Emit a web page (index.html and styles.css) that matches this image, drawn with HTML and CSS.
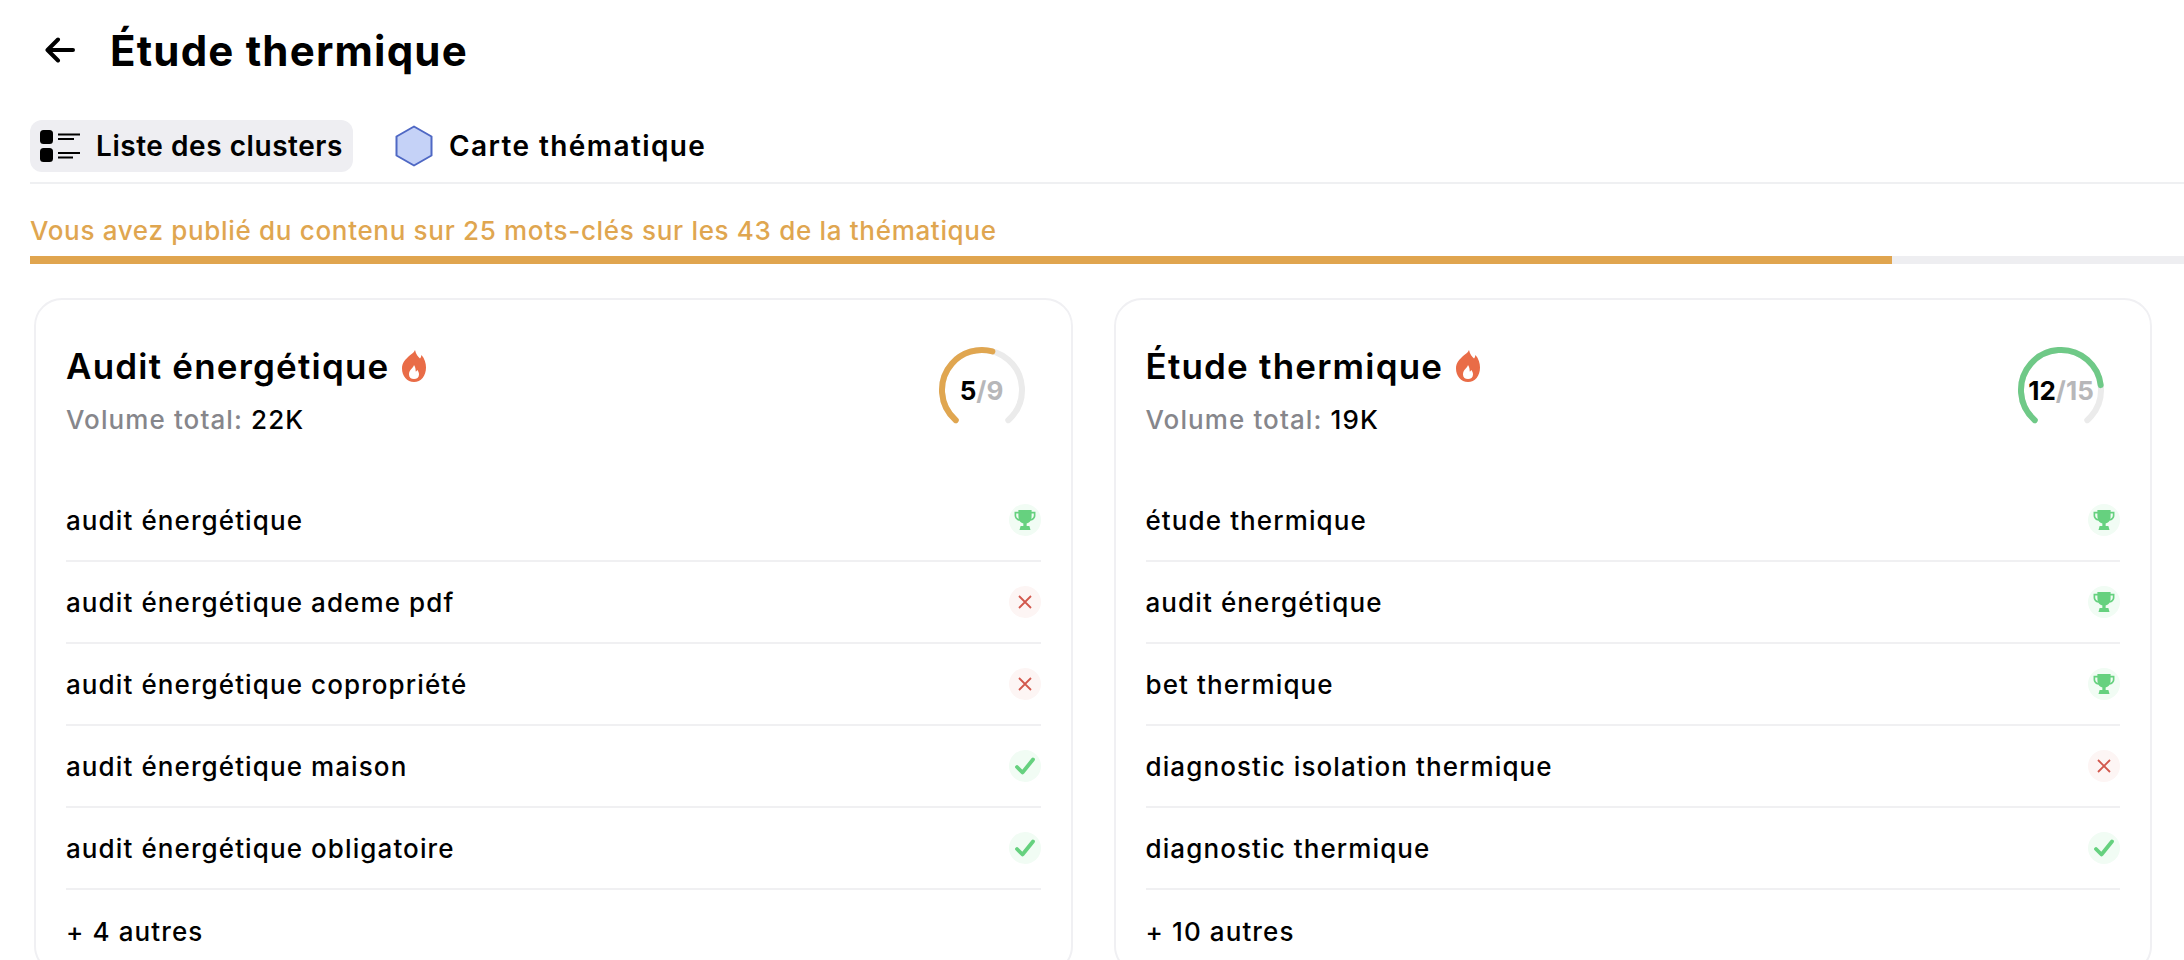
FILE: index.html
```html
<!DOCTYPE html>
<html lang="fr">
<head>
<meta charset="utf-8">
<title>Étude thermique</title>
<link rel="stylesheet" href="styles.css">
</head>
<body>
<svg class="defs" width="0" height="0">
  <defs>
    <symbol id="flame" viewBox="0 0 24 32" preserveAspectRatio="none">
      <path fill-rule="evenodd" d="M13 0c1 4.500 3 6.500 5 8.500 1-1 1-2 1.500-3.500 3 3.500 4.500 8 4.500 12.500C24 26 19 32 12 32S0 26 0 18.500C0 13 3 10 6 7 9 4 12 3 13 0ZM12 15c-.5 3-5 4.500-5 9.500 0 3 2.200 4.500 5 4.500s5-1.500 5-4.500c0-2-.8-3.500-1.800-4.500-.5 1-1 1.500-1.500 1.500 0-2.500-.4-4.500-1.700-6.500Z"/>
    </symbol>
    <symbol id="trophy" viewBox="0 0 20 20">
      <path d="M4 1h12v1.500h3.500V6c0 2.500-2 4.500-4.500 4.700-.8 1.300-2 2.100-3.500 2.400V15.500H14l1 3.500H5l1-3.500h2.500v-2.400C7 12.800 5.800 12 5 10.700 2.500 10.500.5 8.500.5 6V2.500H4V1Zm-2 3v2c0 1.300.9 2.500 2.300 3C4.100 8 4 7 4 6V4H2Zm14 0v2c0 1 0 2-.3 3C17.100 8.500 18 7.300 18 6V4h-2Z"/>
    </symbol>
    <symbol id="cross" viewBox="0 0 14 14">
      <path d="M1 1l12 12M13 1L1 13" fill="none" stroke="currentColor" stroke-width="1.800"/>
    </symbol>
    <symbol id="check" viewBox="0 0 20 18">
      <path d="M2 10l5.500 5.500L18 2.500" fill="none" stroke="currentColor" stroke-width="3.800" stroke-linecap="round" stroke-linejoin="round"/>
    </symbol>
  </defs>
</svg>
<div class="page">
  <header class="head">
    <svg class="back" viewBox="0 0 30 26" width="30" height="26"><path d="M28 13H3M13 2.500L2.500 13 13 23.500" fill="none" stroke="#000" stroke-width="4" stroke-linecap="round" stroke-linejoin="round"/></svg>
    <h1 class="title">Étude thermique</h1>
  </header>

  <nav class="tabs">
    <a class="tab tab-active">
      <svg class="tab-icon" viewBox="0 0 40 32" width="40" height="32">
        <rect x="0" y="0" width="13" height="14" rx="3.500" fill="#000"/>
        <rect x="0" y="18" width="13" height="14" rx="3.500" fill="#000"/>
        <path d="M18 4.500h22M18 9h16M18 23h22M18 27.500h15" fill="none" stroke="#000" stroke-width="2"/>
      </svg>
      <span>Liste des clusters</span>
    </a>
    <a class="tab tab-plain">
      <svg class="hex-icon" viewBox="0 0 38 42" width="38" height="42"><path d="M19 1.500L36.500 11.500V30.500L19 40.500 1.500 30.500V11.500Z" fill="#c5d2f7" stroke="#4f68c4" stroke-width="2" stroke-linejoin="round"/></svg>
      <span>Carte thématique</span>
    </a>
  </nav>

  <p class="progress-label">Vous avez publié du contenu sur 25 mots-clés sur les 43 de la thématique</p>
  <div class="progress"><div class="progress-fill" style="width:86.45%"></div></div>

  <section class="cards">
    <article class="card">
      <div class="card-head">
        <div>
          <h2 class="card-title">Audit énergétique <svg class="flame"><use href="#flame"/></svg></h2>
          <p class="volume"><span class="volume-label">Volume total:</span> 22K</p>
        </div>
        <div class="ring">
          <svg viewBox="0 0 88 88" width="88" height="88">
            <circle class="ring-track" cx="44" cy="44" r="40" pathLength="360" stroke-dasharray="278 360" transform="rotate(131 44 44)"/>
            <circle class="ring-gold" cx="44" cy="44" r="40" pathLength="360" stroke-dasharray="154 360" transform="rotate(131 44 44)"/>
          </svg>
          <span class="ring-text"><b>5</b>/9</span>
        </div>
      </div>
      <ul class="rows">
        <li class="row">audit énergétique <span class="badge badge-ok"><svg class="ic-trophy"><use href="#trophy"/></svg></span></li>
        <li class="row">audit énergétique ademe pdf <span class="badge badge-no"><svg class="ic-cross"><use href="#cross"/></svg></span></li>
        <li class="row">audit énergétique copropriété <span class="badge badge-no"><svg class="ic-cross"><use href="#cross"/></svg></span></li>
        <li class="row">audit énergétique maison <span class="badge badge-ok"><svg class="ic-check"><use href="#check"/></svg></span></li>
        <li class="row">audit énergétique obligatoire <span class="badge badge-ok"><svg class="ic-check"><use href="#check"/></svg></span></li>
        <li class="row">+ 4 autres</li>
      </ul>
    </article>

    <article class="card">
      <div class="card-head">
        <div>
          <h2 class="card-title">Étude thermique <svg class="flame"><use href="#flame"/></svg></h2>
          <p class="volume"><span class="volume-label">Volume total:</span> 19K</p>
        </div>
        <div class="ring">
          <svg viewBox="0 0 88 88" width="88" height="88">
            <circle class="ring-track" cx="44" cy="44" r="40" pathLength="360" stroke-dasharray="278 360" transform="rotate(131 44 44)"/>
            <circle class="ring-green" cx="44" cy="44" r="40" pathLength="360" stroke-dasharray="222 360" transform="rotate(131 44 44)"/>
          </svg>
          <span class="ring-text"><b>12</b>/15</span>
        </div>
      </div>
      <ul class="rows">
        <li class="row">étude thermique <span class="badge badge-ok"><svg class="ic-trophy"><use href="#trophy"/></svg></span></li>
        <li class="row">audit énergétique <span class="badge badge-ok"><svg class="ic-trophy"><use href="#trophy"/></svg></span></li>
        <li class="row">bet thermique <span class="badge badge-ok"><svg class="ic-trophy"><use href="#trophy"/></svg></span></li>
        <li class="row">diagnostic isolation thermique <span class="badge badge-no"><svg class="ic-cross"><use href="#cross"/></svg></span></li>
        <li class="row">diagnostic thermique <span class="badge badge-ok"><svg class="ic-check"><use href="#check"/></svg></span></li>
        <li class="row">+ 10 autres</li>
      </ul>
    </article>
  </section>
</div>
</body>
</html>
```
FILE: styles.css
```css
* { box-sizing: border-box; }
html, body { margin: 0; height: 960px; overflow: hidden; background: #fff; }
body { font-family: Inter, "Noto Sans", sans-serif; color: #000; }
.defs { position: absolute; }
.page { padding-left: 30px; }

.head { display: flex; align-items: center; height: 100px; padding-left: 15px; gap: 20px; }
.back { flex: none; margin-right: 15px; }
.title { margin: 0; font-size: 42px; font-weight: 700; letter-spacing: 1.2px; }

.tabs { display: flex; align-items: center; gap: 32px; height: 84px; padding-top: 20px; padding-bottom: 10px; border-bottom: 2px solid #eff0f2; }
.tab { display: flex; align-items: center; height: 52px; padding: 0 10px; border-radius: 12px; font-size: 28px; font-weight: 600; gap: 16px; }
.tab-active { background: #eeeef2; width: 323px; flex: none; white-space: nowrap; padding-right: 0; letter-spacing: .55px; }
.tab-plain { letter-spacing: 1.4px; }
.hex-icon { flex: none; }

.progress-label { margin: 0; padding-top: 32px; height: 72px; font-size: 26px; line-height: 30px; font-weight: 500; letter-spacing: .68px; color: #dfa650; }
.progress { height: 8px; background: #eeeef1; }
.progress-fill { height: 100%; background: #e0a54f; }

.cards { display: flex; gap: 41px; margin: 34px 32px 0 4px; }
.card { flex: 1 1 0; min-width: 0; border: 2px solid #f0f0f3; border-radius: 28px; padding: 32px 30px 0; }
.card-head { display: flex; justify-content: space-between; align-items: flex-start; height: 148px; padding-top: 14px; }
.card-title { margin: 0; font-size: 35px; line-height: 40px; font-weight: 600; letter-spacing: 1.2px; display: flex; align-items: center; gap: 13px; }
.flame { width: 24px; height: 32px; fill: #e96c47; flex: none; }
.volume { margin: 18px 0 0; font-size: 26px; line-height: 32px; font-weight: 500; letter-spacing: 1.1px; }
.volume-label { color: #86868b; }

.ring { position: relative; width: 88px; height: 88px; margin-right: 15px; margin-top: 0; }
.ring circle { fill: none; stroke-width: 6; stroke-linecap: round; }
.ring-track { stroke: #ebebeb; }
.ring-gold { stroke: #e0a650; }
.ring-green { stroke: #6fc987; }
.ring-text { position: absolute; inset: 0; display: flex; align-items: center; justify-content: center; font-size: 26px; font-weight: 700; color: #b7b7b9; }
.ring-text b { color: #000; font-weight: 700; }

.rows { list-style: none; margin: 0; padding: 0; }
.row { display: flex; align-items: center; justify-content: space-between; height: 82px; font-size: 26px; font-weight: 500; letter-spacing: 1.1px; border-bottom: 2px solid #f0f0f2; }
.row:last-child { border-bottom: 0; }
.badge { display: flex; align-items: center; justify-content: center; width: 32px; height: 32px; border-radius: 50%; }
.badge-ok { background: #f1fcf4; color: #66d17f; }
.badge-no { background: #fdf5f4; color: #d2584d; }
.ic-trophy { width: 22px; height: 22px; fill: #66d17f; }
.ic-cross { width: 14px; height: 14px; }
.ic-check { width: 20px; height: 18px; }
```
